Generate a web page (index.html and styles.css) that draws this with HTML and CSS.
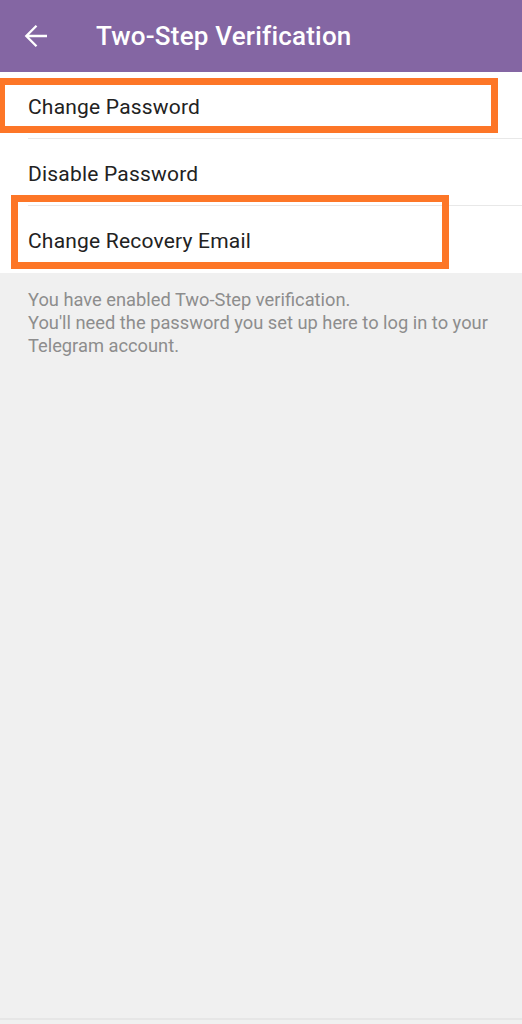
FILE: index.html
```html
<!DOCTYPE html>
<html>
<head>
<meta charset="utf-8">
<link rel="stylesheet" href="styles.css">
</head>
<body>
<div class="app">
  <header class="bar">
    <svg class="back" width="24" height="24" viewBox="0 0 24 24"><path d="M23 12H2.5M12.5 1.8L2.3 12L12.5 22.2" fill="none" stroke="#fff" stroke-width="2.3" stroke-linecap="butt" stroke-linejoin="miter"/></svg>
    <div class="title">Two-Step Verification</div>
  </header>
  <div class="list">
    <div class="row sep"><span>Change Password</span><div class="mark mark1"></div></div>
    <div class="row sep"><span>Disable Password</span></div>
    <div class="row"><span>Change Recovery Email</span><div class="mark mark2"></div></div>
  </div>
  <p class="info">You have enabled Two-Step verification.<br>You'll need the password you set up here to log in to your Telegram account.</p>
  <div class="bottom"></div>
</div>
</body>
</html>
```
FILE: styles.css
```css
html, body { margin: 0; padding: 0; }
body { background: #f0f0f0; font-family: Roboto, "Noto Sans", sans-serif; }
.app { width: 522px; height: 1024px; display: flex; flex-direction: column; position: relative; overflow: hidden; }
.bar { height: 72px; background: #8466a3; display: flex; align-items: center; padding-left: 24px; box-sizing: border-box; }
.back { width: 24px; height: 24px; }
.title { color: #fff; font-size: 26px; font-weight: 500; margin-left: 48px; letter-spacing: 0.2px; }
.list { background: #fff; }
.row { position: relative; height: 67px; display: flex; align-items: center; padding-left: 28px; font-size: 21px; color: #222; }
.row span { position: relative; top: 1px; letter-spacing: 0.2px; }
.row.sep::after { content: ""; position: absolute; left: 28px; right: 0; bottom: 0; height: 1px; background: #e8e8e8; }
.mark { position: absolute; border: 7px solid #fd7627; box-sizing: border-box; }
.mark1 { left: -2px; top: 6px; width: 500px; height: 55px; }
.mark2 { left: 11px; top: -11px; width: 438px; height: 74px; }
.info { margin: 15px 0 0; padding: 0 28px; font-size: 18.3px; line-height: 23px; color: #8d8d8d; }
.bottom { position: absolute; left: 0; right: 0; bottom: 4px; height: 2px; background: #e6e6e6; }
```
